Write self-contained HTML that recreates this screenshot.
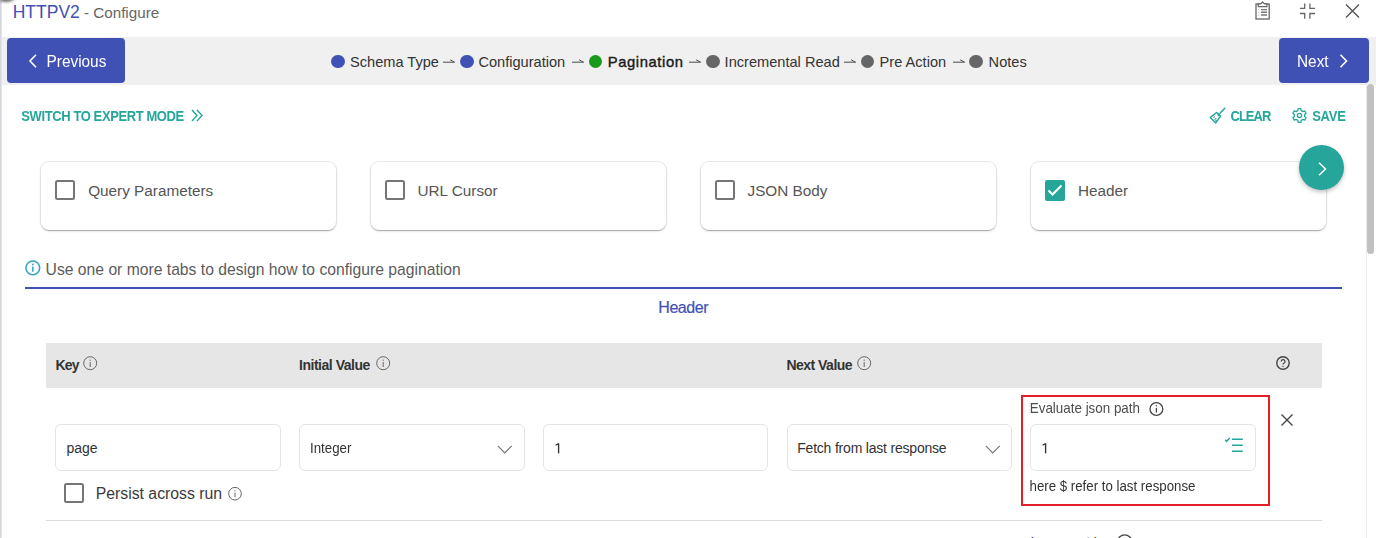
<!DOCTYPE html>
<html><head><meta charset="utf-8">
<style>
*{box-sizing:border-box;margin:0;padding:0}
html,body{width:1376px;height:538px;overflow:hidden;background:#fff;font-family:"Liberation Sans",sans-serif;position:relative}
.a{position:absolute;white-space:nowrap}
.t{position:absolute;white-space:nowrap;line-height:1}
svg{position:absolute;overflow:visible}
.card{position:absolute;top:162.2px;width:295.2px;height:67.9px;border-radius:8px;background:#fff;box-shadow:0 0 0 1px rgba(0,0,0,.07),0 1px 3px 0 rgba(0,0,0,.14),0 2px 1px -1px rgba(0,0,0,.2)}
.cb{position:absolute;width:20px;height:20px;border:2.1px solid #767676;border-radius:2.5px}
.ctxt{position:absolute;font-size:15.3px;color:#555;line-height:1;white-space:nowrap}
.inp{position:absolute;top:423.6px;height:47.4px;border:1px solid #e4e4e4;border-radius:6px;background:#fff}
.itxt{position:absolute;font-size:13px;color:#333;line-height:1;white-space:nowrap}
.hd{position:absolute;top:357.7px;font-size:14px;font-weight:bold;color:#333;line-height:1;white-space:nowrap}
.step{display:inline-block;width:13.6px;height:13.6px;border-radius:50%;vertical-align:top}
</style></head><body>
<!-- left strip -->
<div class="a" style="left:0;top:1px;width:1.6px;height:537px;background:linear-gradient(to right,#cfd3da,#e6e8ec)"></div>
<div class="a" style="left:-3px;top:-8px;width:18px;height:10px;border-radius:50%;background:#666;filter:blur(1.6px)"></div>

<!-- title -->
<div class="t" style="left:12.7px;top:4px;font-size:17.5px;color:#3f51b5">HTTPV2<span style="font-size:15.2px;color:#666"> - Configure</span></div>

<!-- top right icons -->
<svg style="left:1254px;top:0px" width="18" height="22" viewBox="0 0 18 22"><rect x="2" y="4" width="13.2" height="15" fill="none" stroke="#666" stroke-width="1.3"/><path d="M4.2 6.6V3.9h2.6L8.6 2l1.8 1.9h2.6v2.7z" fill="#fff" stroke="#666" stroke-width="1.2" stroke-linejoin="round"/><path d="M7 9.6h6M7 12.3h6M7 15h6" stroke="#777" stroke-width="1.4"/><path d="M4.4 9.6h.9M4.4 12.3h.9M4.4 15h.9" stroke="#999" stroke-width="1"/></svg>
<svg style="left:1299px;top:3px" width="18" height="17" viewBox="0 0 18 17"><path d="M5.7 0.5V5.3H0.9M10.9 0.5V5.3H16.1M5.7 15.7V10.5H0.9M10.9 15.7V10.5H16.1" fill="none" stroke="#666" stroke-width="1.3"/></svg>
<svg style="left:1345px;top:4px" width="15" height="15" viewBox="0 0 15 15"><path d="M1 0.6L14 13.4M14 0.6L1 13.4" stroke="#555" stroke-width="1.4"/></svg>

<!-- gray bar -->
<div class="a" style="left:2px;top:37px;width:1374px;height:48px;background:#f0f0f0"></div>
<div class="a" style="left:7.2px;top:38px;width:118.3px;height:45px;background:#3f51b5;border-radius:4px"></div>
<svg style="left:28px;top:54px" width="10" height="14" viewBox="0 0 10 14"><path d="M8 0.8L2 7l6 6.2" fill="none" stroke="#fff" stroke-width="1.6"/></svg>
<div class="t" style="left:46.5px;top:53.9px;font-size:15.4px;color:#fff;transform:scaleY(1.13);transform-origin:0 13.1px">Previous</div>

<div class="a" style="left:1279.3px;top:38px;width:89.7px;height:45px;background:#3f51b5;border-radius:4px"></div>
<div class="t" style="left:1297px;top:53.9px;font-size:15.4px;color:#fff;transform:scaleY(1.13);transform-origin:0 13.1px">Next</div>
<svg style="left:1339px;top:54px" width="10" height="14" viewBox="0 0 10 14"><path d="M1.5 0.8L7.5 7l-6 6.2" fill="none" stroke="#fff" stroke-width="1.6"/></svg>

<!-- stepper -->
<div class="a" style="left:331.3px;top:54.6px;width:13.6px;height:13.6px;border-radius:50%;background:#3f51b5"></div>
<div class="t" style="left:350px;top:54.7px;font-size:14.6px;color:#333">Schema Type</div>
<div class="a" style="left:460px;top:54.6px;width:13.6px;height:13.6px;border-radius:50%;background:#3f51b5"></div>
<div class="t" style="left:478.4px;top:54.7px;font-size:14.6px;color:#333">Configuration</div>
<div class="a" style="left:588.7px;top:54.6px;width:13.6px;height:13.6px;border-radius:50%;background:#1a9a1a"></div>
<div class="t" style="left:607.7px;top:54.5px;font-size:14.8px;color:#1a1a1a;-webkit-text-stroke:0.4px #1a1a1a;letter-spacing:0.6px">Pagination</div>
<div class="a" style="left:706px;top:54.6px;width:13.6px;height:13.6px;border-radius:50%;background:#666"></div>
<div class="t" style="left:724.6px;top:54.7px;font-size:14.6px;color:#333">Incremental Read</div>
<div class="a" style="left:860.8px;top:54.6px;width:13.6px;height:13.6px;border-radius:50%;background:#666"></div>
<div class="t" style="left:879.6px;top:54.7px;font-size:14.6px;color:#333">Pre Action</div>
<div class="a" style="left:969px;top:54.6px;width:13.6px;height:13.6px;border-radius:50%;background:#666"></div>
<div class="t" style="left:988.6px;top:54.7px;font-size:14.6px;color:#333">Notes</div>
<svg style="left:443px;top:58px" width="12" height="6" viewBox="0 0 12 6"><path d="M0 4.2h11.6M7.2 1.8l4.4 2.4" fill="none" stroke="#4a4a4a" stroke-width="1"/></svg>
<svg style="left:572px;top:58px" width="12" height="6" viewBox="0 0 12 6"><path d="M0 4.2h11.6M7.2 1.8l4.4 2.4" fill="none" stroke="#4a4a4a" stroke-width="1"/></svg>
<svg style="left:689px;top:58px" width="12" height="6" viewBox="0 0 12 6"><path d="M0 4.2h11.6M7.2 1.8l4.4 2.4" fill="none" stroke="#4a4a4a" stroke-width="1"/></svg>
<svg style="left:844px;top:58px" width="12" height="6" viewBox="0 0 12 6"><path d="M0 4.2h11.6M7.2 1.8l4.4 2.4" fill="none" stroke="#4a4a4a" stroke-width="1"/></svg>
<svg style="left:952.5px;top:58px" width="12" height="6" viewBox="0 0 12 6"><path d="M0 4.2h11.6M7.2 1.8l4.4 2.4" fill="none" stroke="#4a4a4a" stroke-width="1"/></svg>

<!-- scrollbar -->
<div class="a" style="left:1366px;top:85px;width:1px;height:453px;background:#ececec"></div>
<div class="a" style="left:1367px;top:84px;width:7.2px;height:170px;background:#c1c1c1;border-radius:4px"></div>

<!-- expert mode / clear / save -->
<div class="t" style="left:21.3px;top:110.4px;font-size:13px;letter-spacing:-0.4px;color:#26a69a;font-weight:bold;transform:scaleY(1.08);transform-origin:0 11.05px">SWITCH TO EXPERT MODE</div>
<svg style="left:191.3px;top:108.8px" width="12" height="13" viewBox="0 0 12 13"><path d="M1 1l5 5.5-5 5.5M6 1l5 5.5-5 5.5" fill="none" stroke="#26a69a" stroke-width="1.4"/></svg>
<svg style="left:1206px;top:104px" width="24" height="24" viewBox="0 0 24 24"><path d="M18.8 4.3L13.9 9.2" stroke="#26a69a" stroke-width="1.5" stroke-linecap="round"/><path d="M10.6 8.5L14.6 12.1L9.7 18.9L4.4 13.4Z" fill="none" stroke="#26a69a" stroke-width="1.5" stroke-linejoin="round"/><path d="M11.4 10.6l1.6 1.4M7.2 13.6l1.6-1M8.6 15.6l1.8-1.4M9.4 17.2l1.2-.9" stroke="#26a69a" stroke-width="1.1"/></svg>
<div class="t" style="left:1230.5px;top:110px;font-size:13px;letter-spacing:-1px;color:#26a69a;font-weight:bold;transform:scaleY(1.08);transform-origin:0 11.05px">CLEAR</div>
<svg style="left:1291.9px;top:107.9px" width="15" height="15" viewBox="0 0 15 15"><path d="M9.19 2.58 L8.84 0.63 L6.16 0.63 L5.81 2.58 L4.09 3.58 L2.22 2.91 L0.88 5.22 L2.40 6.51 L2.40 8.49 L0.88 9.78 L2.22 12.09 L4.09 11.42 L5.81 12.42 L6.16 14.37 L8.84 14.37 L9.19 12.42 L10.91 11.42 L12.78 12.09 L14.12 9.78 L12.60 8.49 L12.60 6.51 L14.12 5.22 L12.78 2.91 L10.91 3.58Z" fill="none" stroke="#26a69a" stroke-width="1.3" stroke-linejoin="round"/><circle cx="7.5" cy="7.5" r="2.1" fill="none" stroke="#26a69a" stroke-width="1.3"/></svg>
<div class="t" style="left:1312.2px;top:110px;font-size:13px;letter-spacing:-0.25px;color:#26a69a;font-weight:bold;transform:scaleY(1.08);transform-origin:0 11.05px">SAVE</div>

<!-- cards -->
<div class="card" style="left:41px"></div>
<div class="cb" style="left:55.3px;top:180.3px"></div>
<div class="ctxt" style="left:88.2px;top:183.4px">Query Parameters</div>
<div class="card" style="left:370.8px"></div>
<div class="cb" style="left:384.8px;top:180.3px"></div>
<div class="ctxt" style="left:417.5px;top:183.4px">URL Cursor</div>
<div class="card" style="left:700.7px"></div>
<div class="cb" style="left:714.5px;top:180.3px"></div>
<div class="ctxt" style="left:747.5px;top:183.4px">JSON Body</div>
<div class="card" style="left:1030.5px"></div>
<div class="a" style="left:1044.5px;top:180.2px;width:20.5px;height:20.5px;background:#26a69a;border-radius:2px"></div>
<svg style="left:1044.5px;top:180.2px" width="20" height="20" viewBox="0 0 20 20"><path d="M3.5 10.5l4 4 9-9" fill="none" stroke="#fff" stroke-width="2"/></svg>
<div class="ctxt" style="left:1078px;top:183.4px">Header</div>
<div class="a" style="left:1299px;top:145px;width:45px;height:45px;border-radius:50%;background:#26a69a;box-shadow:0 2px 4px rgba(0,0,0,.25)"></div>
<svg style="left:1318px;top:161.5px" width="9" height="14" viewBox="0 0 9 14"><path d="M1 0.8l6.5 6.2L1 13.2" fill="none" stroke="#fff" stroke-width="1.4"/></svg>

<!-- info line -->
<svg style="left:25.4px;top:260px" width="16" height="16" viewBox="0 0 16 16"><circle cx="7.8" cy="7.8" r="6.9" fill="none" stroke="#30a8bf" stroke-width="1.5"/><path d="M7.8 6.5v5.2" stroke="#30a8bf" stroke-width="1.5"/><circle cx="7.8" cy="4.4" r="0.9" fill="#30a8bf"/></svg>
<div class="t" style="left:45.6px;top:261.6px;font-size:15.7px;color:#5c5c5c">Use one or more tabs to design how to configure pagination</div>
<div class="a" style="left:25.2px;top:286.8px;width:1316.8px;height:2.4px;background:#4152b6"></div>
<div class="t" style="left:658.3px;top:299.6px;font-size:16px;letter-spacing:-0.45px;-webkit-text-stroke:0.2px #3f51b5;color:#3f51b5">Header</div>

<!-- table header -->
<div class="a" style="left:46px;top:343px;width:1275.5px;height:44.5px;background:#e6e6e6"></div>
<div class="hd" style="left:55.5px;letter-spacing:-0.8px">Key</div>
<svg style="left:82.5px;top:356px" width="15" height="15" viewBox="0 0 15 15"><circle cx="7.2" cy="7.2" r="6.5" fill="none" stroke="#666" stroke-width="1"/><path d="M7.2 6v5" stroke="#666" stroke-width="1"/><circle cx="7.2" cy="4.2" r="0.6" fill="#666"/></svg>
<div class="hd" style="left:299px;letter-spacing:-0.47px">Initial Value</div>
<svg style="left:376px;top:356px" width="15" height="15" viewBox="0 0 15 15"><circle cx="7.2" cy="7.2" r="6.5" fill="none" stroke="#666" stroke-width="1"/><path d="M7.2 6v5" stroke="#666" stroke-width="1"/><circle cx="7.2" cy="4.2" r="0.6" fill="#666"/></svg>
<div class="hd" style="left:786.5px;letter-spacing:-0.53px">Next Value</div>
<svg style="left:857px;top:356px" width="15" height="15" viewBox="0 0 15 15"><circle cx="7.2" cy="7.2" r="6.5" fill="none" stroke="#666" stroke-width="1"/><path d="M7.2 6v5" stroke="#666" stroke-width="1"/><circle cx="7.2" cy="4.2" r="0.6" fill="#666"/></svg>
<svg style="left:1276px;top:356.4px" width="15" height="15" viewBox="0 0 15 15"><circle cx="7" cy="7" r="6.2" fill="none" stroke="#444" stroke-width="1.4"/><path d="M5.2 5.6a1.9 1.9 0 1 1 2.6 1.7c-.6.3-.8.6-.8 1.3" fill="none" stroke="#444" stroke-width="1.2"/><circle cx="7" cy="10.4" r="0.7" fill="#444"/></svg>

<!-- row 1 -->
<div class="inp" style="left:55.2px;width:226px"></div>
<div class="itxt" style="left:66.5px;top:441.3px;font-size:14px">page</div>
<div class="inp" style="left:299px;width:225.5px"></div>
<div class="itxt" style="left:310px;top:441.8px;font-size:13.3px;transform:scaleY(1.08);transform-origin:0 11.30px">Integer</div>
<svg style="left:497px;top:445px" width="16" height="9" viewBox="0 0 16 9"><path d="M0.8 0.8l7 7 7-7" fill="none" stroke="#777" stroke-width="1.2"/></svg>
<div class="inp" style="left:542.5px;width:225.5px"></div>
<svg style="left:555px;top:442.6px" width="6" height="11" viewBox="0 0 6 11"><path d="M3.6 0.4V10.4" stroke="#333" stroke-width="1.35"/><path d="M0.6 2.2L3.6 0.6" stroke="#333" stroke-width="1.2"/></svg>
<div class="inp" style="left:786.5px;width:225.5px"></div>
<div class="itxt" style="left:797.2px;top:441.3px;font-size:14px;letter-spacing:-0.2px">Fetch from last response</div>
<svg style="left:985px;top:445px" width="16" height="9" viewBox="0 0 16 9"><path d="M0.8 0.8l7 7 7-7" fill="none" stroke="#777" stroke-width="1.2"/></svg>

<div class="cb" style="left:64px;top:482.8px"></div>
<div class="t" style="left:95.7px;top:486.2px;font-size:15.8px;color:#3a3a3a">Persist across run</div>
<svg style="left:227.6px;top:487px" width="15" height="15" viewBox="0 0 15 15"><circle cx="7" cy="6.7" r="6.3" fill="none" stroke="#666" stroke-width="1"/><path d="M7 5.6v4.6" stroke="#666" stroke-width="1"/><circle cx="7" cy="3.8" r="0.6" fill="#666"/></svg>

<!-- red box -->
<div class="a" style="left:1020.8px;top:395px;width:249.6px;height:111.2px;border:2.4px solid #e41f29"></div>
<div class="itxt" style="left:1029.8px;top:402px;font-size:13.4px;color:#4d4d4d;transform:scaleY(1.1);transform-origin:0 11.39px">Evaluate json path</div>
<svg style="left:1148.9px;top:402.4px" width="16" height="16" viewBox="0 0 16 16"><circle cx="7.4" cy="7" r="6.4" fill="none" stroke="#444" stroke-width="1.3"/><path d="M7.4 5.9v4.6" stroke="#444" stroke-width="1.3"/><circle cx="7.4" cy="3.7" r="0.8" fill="#444"/></svg>
<div class="inp" style="left:1030px;width:226px"></div>
<svg style="left:1041.8px;top:442.6px" width="6" height="11" viewBox="0 0 6 11"><path d="M3.6 0.4V10.4" stroke="#333" stroke-width="1.35"/><path d="M0.6 2.2L3.6 0.6" stroke="#333" stroke-width="1.2"/></svg>
<svg style="left:1224px;top:436px" width="20" height="17" viewBox="0 0 20 17"><path d="M8 3.2h10.8M8 9.2h10.8M8 15.3h10.8" stroke="#26a69a" stroke-width="1.4"/><path d="M1.2 3.75L2.6 5.3L5.7 2.1" fill="none" stroke="#26a69a" stroke-width="1.5"/></svg>
<div class="itxt" style="left:1029.5px;top:480.4px;font-size:13.27px;transform:scaleY(1.09);transform-origin:0 11.28px">here $ refer to last response</div>
<svg style="left:1281px;top:414px" width="12" height="12" viewBox="0 0 12 12"><path d="M0.5 0.5l11 11M11.5 0.5l-11 11" stroke="#444" stroke-width="1.4"/></svg>

<div class="a" style="left:46px;top:520px;width:1275.5px;height:1px;background:#dcdcdc"></div>
<!-- row 2 partial -->
<div class="itxt" style="left:1030.5px;top:535.3px;font-size:13.4px">Increment by</div>
<svg style="left:1117px;top:533.8px" width="16" height="16" viewBox="0 0 16 16"><circle cx="7.7" cy="7.7" r="6.9" fill="none" stroke="#444" stroke-width="1.3"/></svg>

</body></html>
